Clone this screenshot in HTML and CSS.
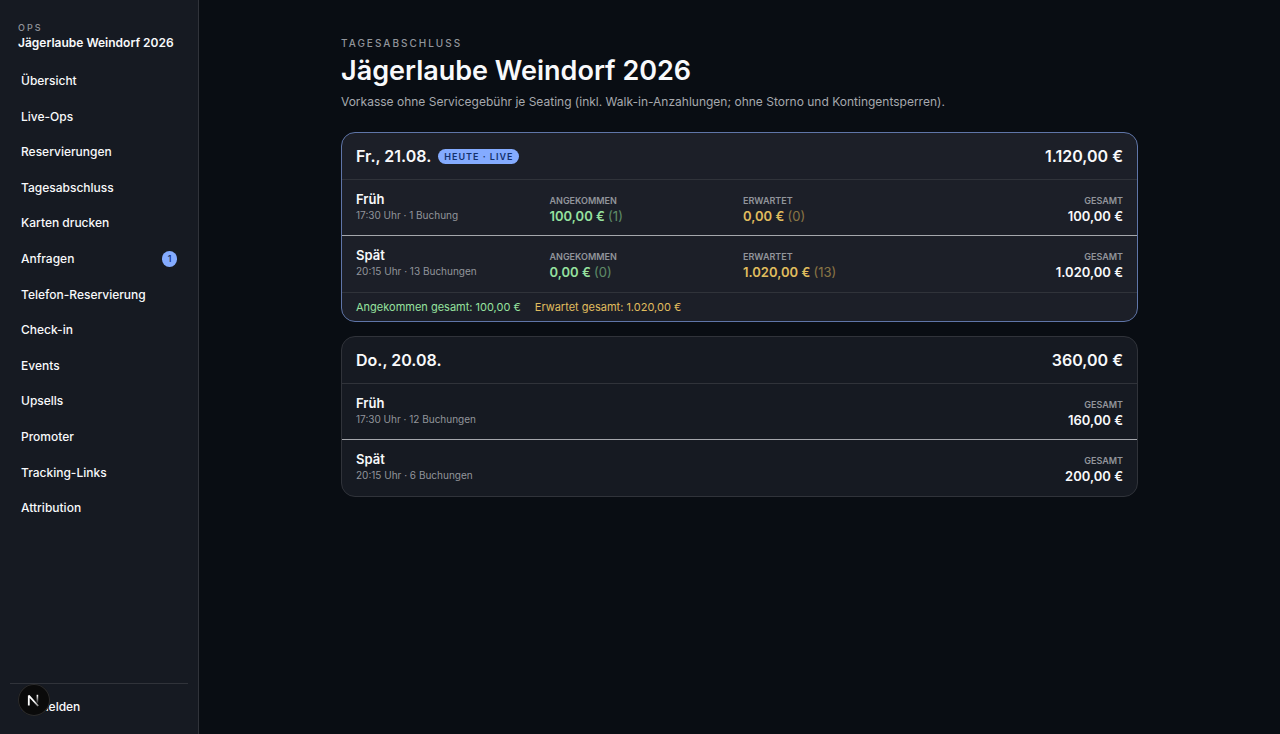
FILE: index.html
```html
<!DOCTYPE html>
<html lang="de">
<head>
<meta charset="utf-8">
<meta name="viewport" content="width=device-width, initial-scale=1">
<title>Tagesabschluss – Jägerlaube Weindorf 2026</title>
<link rel="stylesheet" href="styles.css">
</head>
<body>
<div class="app">
  <aside class="sidebar">
    <div class="brand">
      <div class="brand-label">OPS</div>
      <div class="brand-name">Jägerlaube Weindorf 2026</div>
    </div>
    <nav class="nav">
      <a href="#">Übersicht</a>
      <a href="#">Live-Ops</a>
      <a href="#">Reservierungen</a>
      <a href="#">Tagesabschluss</a>
      <a href="#">Karten drucken</a>
      <a href="#">Anfragen <span class="count">1</span></a>
      <a href="#">Telefon-Reservierung</a>
      <a href="#">Check-in</a>
      <a href="#">Events</a>
      <a href="#">Upsells</a>
      <a href="#">Promoter</a>
      <a href="#">Tracking-Links</a>
      <a href="#">Attribution</a>
    </nav>
    <div class="sidebar-foot">
      <button class="logout" type="button">Abmelden</button>
    </div>
  </aside>

  <main class="main">
    <div class="content">
      <header class="page-head">
        <p class="eyebrow">TAGESABSCHLUSS</p>
        <h1>Jägerlaube Weindorf 2026</h1>
        <p class="lead">Vorkasse ohne Servicegebühr je Seating (inkl. Walk-in-Anzahlungen; ohne Storno und Kontingentsperren).</p>
      </header>

      <section class="card card-today">
        <header class="card-head">
          <h2>Fr., 21.08.</h2>
          <span class="tag">HEUTE · LIVE</span>
          <span class="sum">1.120,00 €</span>
        </header>
        <div class="row">
          <div><h3>Früh</h3><p class="meta">17:30 Uhr · 1 Buchung</p></div>
          <div><p class="label">ANGEKOMMEN</p><p class="value arrived">100,00 € <span>(1)</span></p></div>
          <div><p class="label">ERWARTET</p><p class="value expected">0,00 € <span>(0)</span></p></div>
          <div class="total"><p class="label">GESAMT</p><p class="value">100,00 €</p></div>
        </div>
        <div class="row">
          <div><h3>Spät</h3><p class="meta">20:15 Uhr · 13 Buchungen</p></div>
          <div><p class="label">ANGEKOMMEN</p><p class="value arrived">0,00 € <span>(0)</span></p></div>
          <div><p class="label">ERWARTET</p><p class="value expected">1.020,00 € <span>(13)</span></p></div>
          <div class="total"><p class="label">GESAMT</p><p class="value">1.020,00 €</p></div>
        </div>
        <footer class="card-foot">
          <span class="arrived">Angekommen gesamt: 100,00 €</span>
          <span class="expected">Erwartet gesamt: 1.020,00 €</span>
        </footer>
      </section>

      <section class="card">
        <header class="card-head">
          <h2>Do., 20.08.</h2>
          <span class="sum">360,00 €</span>
        </header>
        <div class="row">
          <div><h3>Früh</h3><p class="meta">17:30 Uhr · 12 Buchungen</p></div>
          <div class="total"><p class="label">GESAMT</p><p class="value">160,00 €</p></div>
        </div>
        <div class="row">
          <div><h3>Spät</h3><p class="meta">20:15 Uhr · 6 Buchungen</p></div>
          <div class="total"><p class="label">GESAMT</p><p class="value">200,00 €</p></div>
        </div>
      </section>
    </div>
  </main>
</div>

<button class="dev-badge" type="button" aria-label="Entwicklerwerkzeuge">
  <svg width="32" height="32" viewBox="0 0 32 32" fill="none" aria-hidden="true">
    <defs>
      <linearGradient id="fade-diag" x1="16" y1="17" x2="21" y2="23" gradientUnits="userSpaceOnUse">
        <stop stop-color="#fff"/><stop offset="1" stop-color="#fff" stop-opacity="0.4"/>
      </linearGradient>
      <linearGradient id="fade-stem" x1="19" y1="11" x2="19" y2="19" gradientUnits="userSpaceOnUse">
        <stop stop-color="#fff"/><stop offset="1" stop-color="#fff" stop-opacity="0.1"/>
      </linearGradient>
    </defs>
    <path d="M10.8 21.5V11.6L20.2 22" stroke="url(#fade-diag)" stroke-width="1.8" stroke-linejoin="bevel"/>
    <path d="M19.4 10.8V19" stroke="url(#fade-stem)" stroke-width="1.6"/>
  </svg>
</button>
</body>
</html>
```
FILE: styles.css
```css
:root {
  --bg: #090d13;
  --panel: #161a22;
  --panel-today: #1c1f28;
  --line: #30333a;
  --text: #f8f9fb;
  --muted: #92959b;
  --accent: #84abff;
  --on-accent: #12306b;
  --green: #96e29f;
  --amber: #e0bd5e;
}

* { box-sizing: border-box; }

body {
  margin: 0;
  background: var(--bg);
  color: var(--text);
  font-family: Inter, "Liberation Sans", sans-serif;
  font-size: 12px;
  line-height: 1.3;
}

h1, h2, h3, p { margin: 0; }

.app { display: flex; min-height: 100vh; }

.sidebar {
  display: flex;
  flex-direction: column;
  flex: 0 0 199px;
  padding: 21px 10px 9px;
  background: var(--panel);
  border-right: 1px solid var(--line);
}

.brand { padding: 0 8px; margin-bottom: 12px; white-space: nowrap; }
.brand-label {
  color: var(--muted);
  font-size: 9px;
  font-weight: 500;
  line-height: 14px;
  letter-spacing: 2px;
}
.brand-name { font-weight: 600; line-height: 16px; }

.nav { display: flex; flex-direction: column; flex: 1; }
.nav a {
  display: flex;
  align-items: center;
  justify-content: space-between;
  padding: 10px 11px;
  color: inherit;
  font-weight: 500;
  text-decoration: none;
}
.count {
  min-width: 15px;
  margin: -1px 0;
  border-radius: 8px;
  background: var(--accent);
  color: var(--on-accent);
  font-size: 9px;
  line-height: 16px;
  text-align: center;
}

.sidebar-foot { padding-top: 5px; border-top: 1px solid var(--line); }
.logout {
  width: 100%;
  padding: 10px 12px;
  border: 0;
  background: none;
  color: inherit;
  font: inherit;
  font-weight: 500;
  text-align: left;
}

.main { flex: 1; padding: 35px 28px; }
.content { max-width: 797px; margin: 0 auto; }

.eyebrow {
  color: var(--muted);
  font-size: 10px;
  font-weight: 500;
  line-height: 16px;
  letter-spacing: 2px;
}
h1 { font-size: 27px; font-weight: 600; line-height: 32px; margin-top: 4px; }
.lead { margin-top: 5px; color: #a6a9ae; line-height: 20px; }

.card {
  margin-top: 14px;
  overflow: hidden;
  border: 1px solid var(--line);
  border-radius: 14px;
  background: var(--panel);
}
.page-head + .card { margin-top: 20px; }
.card-today { border-color: #5f75a8; background: var(--panel-today); }

.card-head {
  display: flex;
  align-items: center;
  gap: 7px;
  padding: 11px 14px;
  border-bottom: 1px solid var(--line);
}
h2, .sum { font-size: 16px; font-weight: 600; line-height: 24px; }
.sum { margin-left: auto; }
.tag {
  padding: 0 6px;
  border-radius: 8px;
  background: var(--accent);
  color: var(--on-accent);
  font-size: 9px;
  font-weight: 600;
  line-height: 15px;
  letter-spacing: 1px;
}

.row {
  display: grid;
  grid-template-columns: repeat(4, 1fr);
  gap: 7px;
  padding: 11px 14px 12px;
}
.row + .row { padding-bottom: 13px; border-top: 1px solid #a5a7ac; }
.total { grid-column: 4; text-align: right; }

h3 { font-size: 13px; font-weight: 600; line-height: 17px; }
.meta { color: var(--muted); font-size: 10px; line-height: 14px; }
.label {
  color: var(--muted);
  font-size: 9px;
  font-weight: 600;
  line-height: 19px;
}
.value { font-size: 13px; font-weight: 600; line-height: 13px; }
.value span { font-weight: 400; opacity: 0.55; }
.arrived { color: var(--green); }
.expected { color: var(--amber); }

.card-foot {
  display: flex;
  gap: 14px;
  padding: 6px 14px;
  border-top: 1px solid var(--line);
  font-size: 11px;
  line-height: 16px;
}

.dev-badge {
  position: fixed;
  left: 18px;
  bottom: 18px;
  width: 32px;
  height: 32px;
  padding: 0;
  border: 0;
  border-radius: 50%;
  background: #0a0a0a;
  box-shadow: inset 0 0 0 1px #2b2b2c;
}
.dev-badge svg { display: block; }
```
